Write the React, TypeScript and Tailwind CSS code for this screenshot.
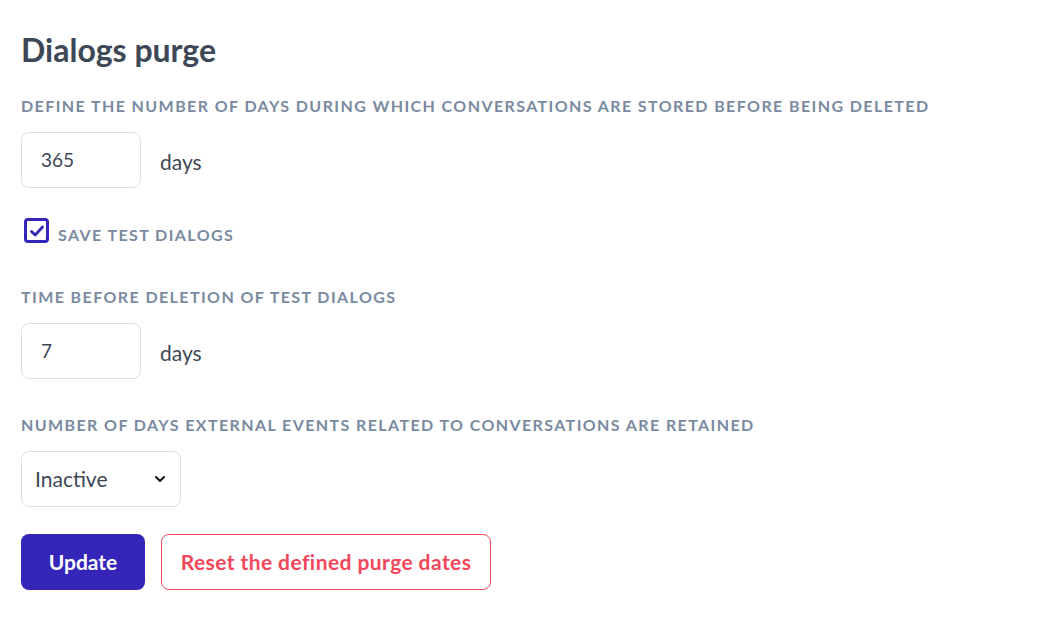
import React from "react";

const labelCls =
  "text-[16px] font-bold uppercase tracking-[0.088em] text-[#7a8aa0] leading-[20px]";

function NumberField({ value }: { value: string }) {
  return (
    <div className="flex items-center gap-[19px]">
      <div className="w-[120px] h-[56px] rounded-[8px] border border-[#d5e0ec] bg-white flex items-center pl-[19px] text-[19px] text-[#3d4756]">
        {value}
      </div>
      <span className="text-[21px] text-[#3d4756] pt-[3px]">days</span>
    </div>
  );
}

export default function App() {
  return (
    <div
      className="w-[1054px] h-[622px] bg-white pl-[21px] pt-[30px] flex flex-col"
      style={{ fontFamily: "Lato, 'Noto Sans', sans-serif" }}
    >
      <h1 className="text-[32px] font-bold text-[#3d4756] leading-[40px]">Dialogs purge</h1>
      <div className={labelCls + " mt-[26px]"}>
        Define the number of days during which conversations are stored before being deleted
      </div>
      <div className="mt-[16px]">
        <NumberField value="365" />
      </div>
      <div className="mt-[30px] flex items-start gap-[9px] pl-[3px]">
        <div className="w-[25px] h-[25px] rounded-[4px] border-[3px] border-[#3525b8] flex items-center justify-center">
          <svg width="16" height="16" viewBox="0 0 16 16" fill="none">
            <path d="M2.5 8.5 L6.2 12 L13.5 4" stroke="#3525b8" strokeWidth="2.8" strokeLinecap="round" strokeLinejoin="round" />
          </svg>
        </div>
        <span className={labelCls + " mt-[7px]"}>Save test dialogs</span>
      </div>
      <div className={labelCls + " mt-[42px]"}>Time before deletion of test dialogs</div>
      <div className="mt-[16px]">
        <NumberField value="7" />
      </div>
      <div className={labelCls + " mt-[36px]"}>
        Number of days external events related to conversations are retained
      </div>
      <div className="mt-[16px] w-[160px] h-[56px] rounded-[8px] border border-[#d5e0ec] bg-white flex items-center justify-between pl-[13px] pr-[14px] text-[21px] text-[#3d4756]">
        <span>Inactive</span>
        <svg width="12" height="8" viewBox="0 0 12 8" fill="none">
          <path d="M2 2 L6 6 L10 2" stroke="#111" strokeWidth="2" strokeLinecap="round" strokeLinejoin="round" />
        </svg>
      </div>
      <div className="mt-[27px] flex gap-[16px]">
        <button className="w-[124px] h-[56px] rounded-[8px] bg-[#3525b8] text-white text-[21px] font-bold">
          Update
        </button>
        <button className="w-[330px] h-[56px] rounded-[8px] border border-[#f2475a] bg-white text-[#f2475a] text-[21px] tracking-[0.02em] font-bold">
          Reset the defined purge dates
        </button>
      </div>
    </div>
  );
}
